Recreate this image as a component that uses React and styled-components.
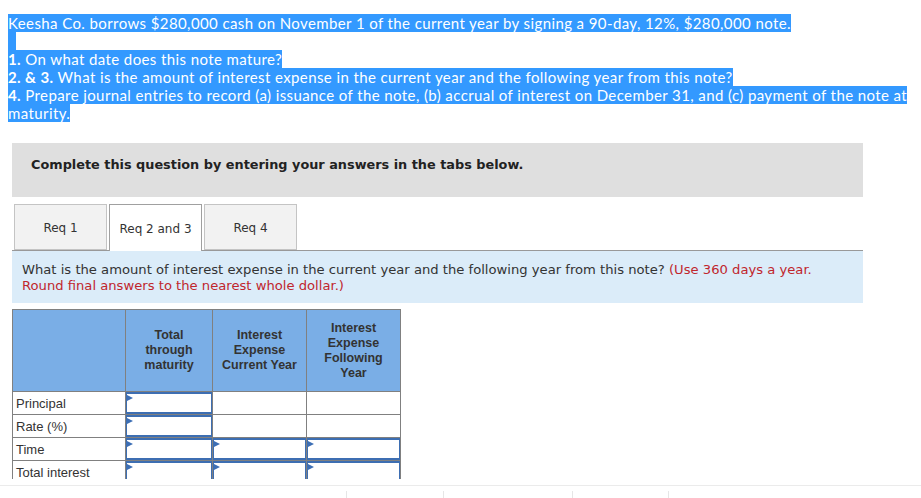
import React from "react";
import styled, { createGlobalStyle } from "styled-components";

const GlobalStyle = createGlobalStyle`
  html, body { margin: 0; padding: 0; background: #fff; }
  body { overflow: hidden; }
`;

const Page = styled.div`
  width: 921px;
  height: 498px;
  overflow: hidden;
`;

const Content = styled.div`
  padding: 14px 8px 0 8px;
`;

const Intro = styled.p`
  margin: 0;
  font-family: Lato, "Open Sans", sans-serif;
  font-size: 15px;
  letter-spacing: 0.4px;
  line-height: 18px;
  color: #fff;
`;

const Hl = styled.span`
  background: #3399ff;
  color: #fff;
  b { font-weight: 700; }
`;

const HlGap = styled.span`
  display: inline-block;
  width: 8px;
  height: 18px;
  vertical-align: top;
  background: #3399ff;
`;

const Section = styled.div`
  margin: 21px 0 0 4px;
  width: 851px;
`;

const Banner = styled.div`
  box-sizing: border-box;
  height: 54px;
  background: #dfdfdf;
  padding: 14px 0 0 19px;
  font-family: "DejaVu Sans", Verdana, sans-serif;
  font-weight: 700;
  font-size: 12.85px;
  line-height: 16px;
  color: #222;
`;

const TabBar = styled.div`
  margin-top: 7px;
  display: flex;
  gap: 2px;
  padding-left: 2px;
  border-bottom: 1px solid #999;
  height: 46px;
`;

const Tab = styled.div`
  box-sizing: border-box;
  width: 93px;
  height: ${(p) => (p.$active ? "47px" : "46px")};
  border: 1px solid ${(p) => (p.$active ? "#a0a0a0" : "#c4c4c4")};
  border-bottom: ${(p) => (p.$active ? "none" : "1px solid #c4c4c4")};
  background: ${(p) => (p.$active ? "#fff" : "#f2f2f2")};
  display: flex;
  align-items: center;
  justify-content: center;
  padding-top: 2px;
  padding-bottom: ${(p) => (p.$active ? "1px" : "0")};
  font-family: "DejaVu Sans", Verdana, sans-serif;
  font-size: 12px;
  color: #333;
  position: relative;
  z-index: 1;
`;

const Info = styled.div`
  box-sizing: border-box;
  height: 52px;
  background: #dbecf9;
  padding: 11px 50px 0 10px;
  font-family: "DejaVu Sans", Verdana, sans-serif;
  font-size: 13.15px;
  line-height: 16px;
  color: #333;
`;

const Red = styled.span`
  color: #c0262d;
`;

const TableWrap = styled.div`
  margin-top: 6px;
  height: 170px;
  overflow: hidden;
`;

const Table = styled.table`
  border-collapse: collapse;
  table-layout: fixed;
  font-family: "Liberation Sans", Arial, sans-serif;
  font-size: 13px;
  color: #333;
  td, th { border: 1px solid #808080; padding: 0; }
`;

const HeadCell = styled.th`
  background: #7aaee6;
  height: 81px;
  font-weight: 700;
  font-size: 12.5px;
  line-height: 15px;
  text-align: center;
  vertical-align: middle;
  color: #333;
`;

const Label = styled.td`
  height: 22px;
  padding-left: 3px !important;
  text-align: left;
  vertical-align: middle;
`;

const Cell = styled.td`
  height: 22px;
  vertical-align: top;
`;

const Input = styled.div`
  position: relative;
  box-sizing: border-box;
  height: 22px;
  border-style: solid;
  border-color: #3d6eb2;
  border-width: 2px 1px 2px 1px;
  background: #fff;
  &::before {
    content: "";
    position: absolute;
    left: 0;
    top: 1px;
    border-left: 6px solid #3d6fb5;
    border-top: 3px solid transparent;
    border-bottom: 3px solid transparent;
  }
`;

const Footer = styled.div`
  margin-top: 6px;
  border-top: 1px solid #ebebeb;
  display: grid;
  grid-template-columns: 346px 97px 129px 96px 1fr;
  padding-top: 5px;
  height: 12px;
`;

const Tick = styled.div`
  border-left: ${(p) => (p.$first ? "none" : "1px solid #e6e6e6")};
`;

const rows = [
  { label: "Principal", inputs: [true, false, false] },
  { label: "Rate (%)", inputs: [true, false, false] },
  { label: "Time", inputs: [true, true, true] },
  { label: "Total interest", inputs: [true, true, true] },
];

export default function App() {
  return (
    <Page>
      <GlobalStyle />
      <Content>
        <Intro>
          <Hl>
            Keesha Co. borrows $280,000 cash on November 1 of the current year by signing a 90-day, 12%, $280,000 note.{" "}
          </Hl>
          <br />
          <HlGap />
          <br />
          <Hl>
            <b>1.</b> On what date does this note mature?{" "}
          </Hl>
          <br />
          <Hl>
            <b>2. &amp; 3.</b> What is the amount of interest expense in the current year and the following year from this note?{" "}
          </Hl>
          <br />
          <Hl>
            <b>4.</b> Prepare journal entries to record (a) issuance of the note, (b) accrual of interest on December 31, and (c) payment of the note at maturity.
          </Hl>
        </Intro>
        <Section>
          <Banner>Complete this question by entering your answers in the tabs below.</Banner>
          <TabBar>
            <Tab>Req 1</Tab>
            <Tab $active>Req 2 and 3</Tab>
            <Tab>Req 4</Tab>
          </TabBar>
          <Info>
            What is the amount of interest expense in the current year and the following year from this note?{" "}
            <Red>(Use 360 days a year. Round final answers to the nearest whole dollar.)</Red>
          </Info>
          <TableWrap>
            <Table>
              <colgroup>
                <col style={{ width: 113 }} />
                <col style={{ width: 87 }} />
                <col style={{ width: 94 }} />
                <col style={{ width: 94 }} />
              </colgroup>
              <thead>
                <tr>
                  <HeadCell />
                  <HeadCell>
                    Total
                    <br />
                    through
                    <br />
                    maturity
                  </HeadCell>
                  <HeadCell>
                    Interest
                    <br />
                    Expense
                    <br />
                    Current Year
                  </HeadCell>
                  <HeadCell>
                    Interest
                    <br />
                    Expense
                    <br />
                    Following
                    <br />
                    Year
                  </HeadCell>
                </tr>
              </thead>
              <tbody>
                {rows.map((r) => (
                  <tr key={r.label}>
                    <Label>{r.label}</Label>
                    {r.inputs.map((hasInput, i) => (
                      <Cell key={i}>{hasInput ? <Input /> : null}</Cell>
                    ))}
                  </tr>
                ))}
              </tbody>
            </Table>
          </TableWrap>
        </Section>
      </Content>
      <Footer>
        <Tick $first />
        <Tick />
        <Tick />
        <Tick />
        <Tick />
      </Footer>
    </Page>
  );
}
